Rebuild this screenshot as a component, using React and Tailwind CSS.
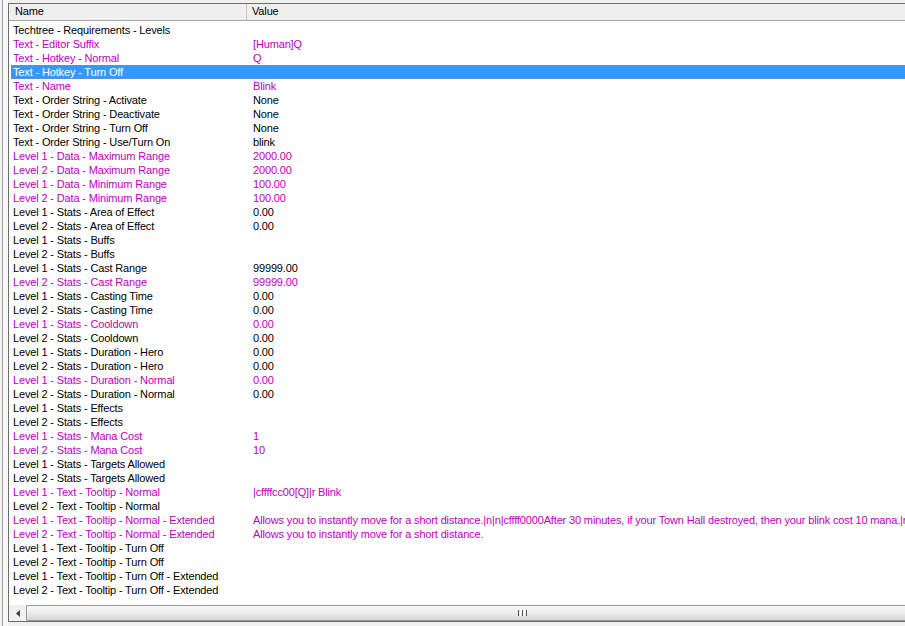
import React from "react";

const rows = [
  ["Techtree - Requirements - Levels", "", 0],
  ["Text - Editor Suffix", "[Human]Q", 1],
  ["Text - Hotkey - Normal", "Q", 1],
  ["Text - Hotkey - Turn Off", "", 2],
  ["Text - Name", "Blink", 1],
  ["Text - Order String - Activate", "None", 0],
  ["Text - Order String - Deactivate", "None", 0],
  ["Text - Order String - Turn Off", "None", 0],
  ["Text - Order String - Use/Turn On", "blink", 0],
  ["Level 1 - Data - Maximum Range", "2000.00", 1],
  ["Level 2 - Data - Maximum Range", "2000.00", 1],
  ["Level 1 - Data - Minimum Range", "100.00", 1],
  ["Level 2 - Data - Minimum Range", "100.00", 1],
  ["Level 1 - Stats - Area of Effect", "0.00", 0],
  ["Level 2 - Stats - Area of Effect", "0.00", 0],
  ["Level 1 - Stats - Buffs", "", 0],
  ["Level 2 - Stats - Buffs", "", 0],
  ["Level 1 - Stats - Cast Range", "99999.00", 0],
  ["Level 2 - Stats - Cast Range", "99999.00", 1],
  ["Level 1 - Stats - Casting Time", "0.00", 0],
  ["Level 2 - Stats - Casting Time", "0.00", 0],
  ["Level 1 - Stats - Cooldown", "0.00", 1],
  ["Level 2 - Stats - Cooldown", "0.00", 0],
  ["Level 1 - Stats - Duration - Hero", "0.00", 0],
  ["Level 2 - Stats - Duration - Hero", "0.00", 0],
  ["Level 1 - Stats - Duration - Normal", "0.00", 1],
  ["Level 2 - Stats - Duration - Normal", "0.00", 0],
  ["Level 1 - Stats - Effects", "", 0],
  ["Level 2 - Stats - Effects", "", 0],
  ["Level 1 - Stats - Mana Cost", "1", 1],
  ["Level 2 - Stats - Mana Cost", "10", 1],
  ["Level 1 - Stats - Targets Allowed", "", 0],
  ["Level 2 - Stats - Targets Allowed", "", 0],
  ["Level 1 - Text - Tooltip - Normal", "|cffffcc00[Q]|r Blink", 1],
  ["Level 2 - Text - Tooltip - Normal", "", 0],
  [
    "Level 1 - Text - Tooltip - Normal - Extended",
    "Allows you to instantly move for a short distance.|n|n|cffff0000After 30 minutes, if your Town Hall destroyed, then your blink cost 10 mana.|r",
    1,
  ],
  ["Level 2 - Text - Tooltip - Normal - Extended", "Allows you to instantly move for a short distance.", 1],
  ["Level 1 - Text - Tooltip - Turn Off", "", 0],
  ["Level 2 - Text - Tooltip - Turn Off", "", 0],
  ["Level 1 - Text - Tooltip - Turn Off - Extended", "", 0],
  ["Level 2 - Text - Tooltip - Turn Off - Extended", "", 0],
];

function Row({ name, value, kind }) {
  if (kind === 2) {
    return (
      <div className="flex h-[14px] ml-[2px] bg-[#3399ff] border-y border-[#5c8fd0] text-white leading-[12px] whitespace-nowrap">
        <div className="w-[236px] shrink-0 pl-[2px]">{name}</div>
        <div className="pl-[6px]">{value}</div>
      </div>
    );
  }
  const color = kind === 1 ? "text-[#bb00bb]" : "text-black";
  return (
    <div className={`flex h-[14px] ml-[2px] leading-[14px] whitespace-nowrap ${color}`}>
      <div className="w-[236px] shrink-0 pl-[2px]">{name}</div>
      <div className="pl-[6px]">{value}</div>
    </div>
  );
}

export default function App() {
  return (
    <div className="w-[905px] h-[626px] bg-[#f0f0f0] flex overflow-hidden text-[11px] tracking-[-0.15px] font-['Liberation_Sans',Arial,sans-serif] antialiased">
      {/* window frame edge */}
      <div className="w-[8px] shrink-0 pl-[2px]">
        <div className="h-full border-l border-[#a0a0a0] bg-[#f7f7f7]" />
      </div>

      <div className="flex-1 min-w-0 flex flex-col mt-[3px] mb-[4px] bg-white border-t border-l border-b border-[#6d6d6d]">
        {/* header */}
        <div className="flex h-[17px] shrink-0 bg-[#efefef] border-b border-[#a5a5a5] leading-[15px] text-black">
          <div className="w-[238px] shrink-0 pl-[6px] border-r border-[#c4c4c4]">Name</div>
          <div className="pl-[5px]">Value</div>
        </div>

        {/* rows */}
        <div className="flex-1 min-h-0 overflow-hidden pt-[2px]">
          {rows.map((r, i) => (
            <Row key={i} name={r[0]} value={r[1]} kind={r[2]} />
          ))}
        </div>

        {/* horizontal scrollbar */}
        <div className="flex h-[16px] shrink-0 bg-[#f0f0f0] overflow-hidden">
          <div className="w-[17px] shrink-0 flex items-center justify-center">
            <svg width="4" height="7" viewBox="0 0 4 7">
              <path d="M4 0 L0 3.5 L4 7 Z" fill="#404040" />
            </svg>
          </div>
          <div className="w-[1000px] shrink-0 border-t border-b border-l border-[#9a9a9a] rounded-l-[2px] bg-gradient-to-b from-[#f8f8f8] via-[#ececec] to-[#d6d6d6] flex items-center">
            <div className="ml-[491px] flex gap-[1px]">
              <div className="w-[1px] h-[6px] bg-[#555]" />
              <div className="w-[1px] h-[6px] bg-[#fff]" />
              <div className="w-[1px] h-[6px] bg-[#555]" />
              <div className="w-[1px] h-[6px] bg-[#fff]" />
              <div className="w-[1px] h-[6px] bg-[#555]" />
            </div>
          </div>
        </div>
      </div>
    </div>
  );
}
